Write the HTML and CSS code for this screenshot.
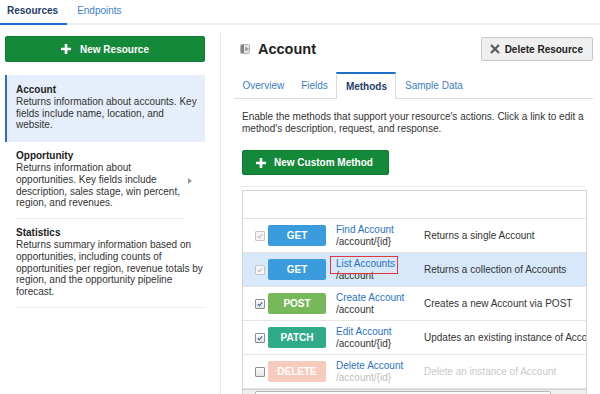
FILE: index.html
```html
<!DOCTYPE html>
<html lang="en">
<head>
<meta charset="utf-8">
<title>Resources</title>
<link rel="stylesheet" href="styles.css">
</head>
<body>
<div class="app">
  <nav class="topnav">
    <a class="topnav-tab active">Resources</a>
    <a class="topnav-tab">Endpoints</a>
  </nav>
  <div class="layout">
    <aside class="sidebar">
      <button class="btn btn-green btn-block">
        <svg class="ico-plus" width="10" height="10" viewBox="0 0 10 10"><path d="M5 0V10M0 5H10" stroke="#fff" stroke-width="2.6"/></svg>
        <span>New Resource</span>
      </button>
      <ul class="res-list">
        <li class="res-item selected">
          <div class="res-body">
            <div class="res-title">Account</div>
            <div class="res-desc">Returns information about accounts. Key fields include name, location, and website.</div>
          </div>
        </li>
        <li class="res-item">
          <div class="res-body">
            <div class="res-title">Opportunity</div>
            <div class="res-desc">Returns information about opportunities. Key fields include description, sales stage, win percent, region, and revenues.</div>
          </div>
          <span class="res-arrow"><span class="tri"></span></span>
        </li>
        <li class="res-item">
          <div class="res-body">
            <div class="res-title">Statistics</div>
            <div class="res-desc">Returns summary information based on opportunities, including counts of opportunities per region, revenue totals by region, and the opportunity pipeline forecast.</div>
          </div>
        </li>
      </ul>
    </aside>
    <main class="main">
      <header class="main-head">
        <div class="title-wrap">
          <svg class="ico-panel" width="10" height="10" viewBox="0 0 10 10">
            <rect x="0.5" y="0.5" width="9" height="9" rx="1" fill="#e2e2e2" stroke="#b5b5b5"/>
            <rect x="1" y="1" width="3" height="8" fill="#858585"/>
            <path d="M6 3V7M6 5H8.5" stroke="#777" stroke-width="1"/>
          </svg>
          <h1 class="title">Account</h1>
        </div>
        <button class="btn btn-gray">
          <svg width="10" height="10" viewBox="0 0 10 10"><path d="M1 1L9 9M9 1L1 9" stroke="#5a5a5a" stroke-width="2.2"/></svg>
          <span>Delete Resource</span>
        </button>
      </header>
      <div class="tabs">
        <a class="tab">Overview</a>
        <a class="tab">Fields</a>
        <a class="tab active">Methods</a>
        <a class="tab">Sample Data</a>
      </div>
      <p class="intro">Enable the methods that support your resource's actions. Click a link to edit a method's description, request, and response.</p>
      <button class="btn btn-green btn-custom">
        <svg width="10" height="10" viewBox="0 0 10 10"><path d="M5 0V10M0 5H10" stroke="#fff" stroke-width="2.6"/></svg>
        <span>New Custom Method</span>
      </button>
      <div class="rule"></div>
      <div class="methods">
        <div class="mhead"></div>
        <div class="mrow">
          <span class="cb cb-dis"><svg viewBox="0 0 10 10"><path d="M2.2 5.2L4.2 7.2L7.8 2.8" fill="none" stroke="#b8b8b8" stroke-width="1.3"/></svg></span>
          <span class="badge get">GET</span>
          <div class="mname"><a class="link">Find Account</a><span class="path">/account/{id}</span></div>
          <span class="mdesc">Returns a single Account</span>
        </div>
        <div class="mrow hl">
          <span class="cb cb-dis"><svg viewBox="0 0 10 10"><path d="M2.2 5.2L4.2 7.2L7.8 2.8" fill="none" stroke="#b8b8b8" stroke-width="1.3"/></svg></span>
          <span class="badge get">GET</span>
          <div class="mname"><a class="link marked">List Accounts</a><span class="path">/account</span></div>
          <span class="mdesc">Returns a collection of Accounts</span>
        </div>
        <div class="mrow">
          <span class="cb cb-on"><svg viewBox="0 0 10 10"><path d="M2.2 5.2L4.2 7.2L7.8 2.8" fill="none" stroke="#2b56a6" stroke-width="1.4"/></svg></span>
          <span class="badge post">POST</span>
          <div class="mname"><a class="link">Create Account</a><span class="path">/account</span></div>
          <span class="mdesc">Creates a new Account via POST</span>
        </div>
        <div class="mrow">
          <span class="cb cb-on"><svg viewBox="0 0 10 10"><path d="M2.2 5.2L4.2 7.2L7.8 2.8" fill="none" stroke="#2b56a6" stroke-width="1.4"/></svg></span>
          <span class="badge patch">PATCH</span>
          <div class="mname"><a class="link">Edit Account</a><span class="path">/account/{id}</span></div>
          <span class="mdesc">Updates an existing instance of Account</span>
        </div>
        <div class="mrow off">
          <span class="cb"></span>
          <span class="badge delete">DELETE</span>
          <div class="mname"><a class="link">Delete Account</a><span class="path">/account/{id}</span></div>
          <span class="mdesc">Delete an instance of Account</span>
        </div>
        <div class="hscroll">
          <span class="sb-arrow left"></span>
          <span class="sb-thumb"><span class="grip"></span></span>
          <span class="sb-track"></span>
          <span class="sb-arrow right"></span>
        </div>
      </div>
    </main>
  </div>
</div>
</body>
</html>
```

FILE: styles.css
```css
* { box-sizing: border-box; }
html, body { margin: 0; padding: 0; }
body {
  font-family: "Liberation Sans", Arial, sans-serif;
  font-size: 10px;
  color: #333;
  background: #fff;
  width: 600px;
  height: 394px;
  overflow: hidden;
}
.app { display: flex; flex-direction: column; height: 394px; }

/* top nav */
.topnav {
  display: flex;
  flex: none;
  height: 25px;
  border-bottom: 2px solid #eceff3;
}
.topnav-tab {
  height: 25px;
  padding: 5px 9px 0 10px;
  line-height: 12px;
  color: #3a7fc5;
  text-decoration: none;
}
.topnav-tab.active {
  padding-left: 7px;
  font-weight: bold;
  color: #1e3b66;
  border-bottom: 2px solid #1b72c6;
}

.layout { display: flex; flex: 1; min-height: 0; }

/* sidebar */
.sidebar {
  width: 221px;
  flex: none;
  margin-top: 8px;
  padding: 3px 15px 0 5px;
  border-right: 1px solid #e7e7e7;
}
.btn {
  display: flex;
  align-items: center;
  justify-content: center;
  font-family: inherit;
  font-size: 10px;
  font-weight: bold;
  cursor: pointer;
  padding: 0;
}
.btn-green {
  background: #15893a;
  border: 1px solid #0f7a30;
  border-radius: 2px;
  color: #fff;
}
.btn-block { width: 100%; height: 26px; gap: 9px; }

.res-list { list-style: none; margin: 13px 0 0; padding: 0; }
.res-item { display: flex; padding-left: 11px; }
.res-item.selected {
  background: #e5eefa;
  border-left: 2px solid #2a6fcf;
  padding-left: 9px;
  padding-right: 3px;
}
.res-body {
  flex: 1;
  min-width: 0;
  padding: 8px 0 9px;
  line-height: 11.8px;
  border-bottom: 1px solid #ececec;
}
.selected .res-body { border-bottom: none; padding: 9px 0 11px; }
.res-title { font-weight: bold; color: #222; }
.res-arrow {
  flex: none;
  width: 21px;
  padding-left: 4px;
  display: flex;
  align-items: center;
}
.tri {
  width: 0; height: 0;
  border-left: 4px solid #9a9a9a;
  border-top: 3px solid transparent;
  border-bottom: 3px solid transparent;
}

/* main */
.main {
  flex: 1;
  min-width: 0;
  display: flex;
  flex-direction: column;
  padding: 12px 7px 0 13px;
  overflow: hidden;
}
.main-head {
  display: flex;
  align-items: center;
  justify-content: space-between;
  height: 24px;
  flex: none;
}
.title-wrap { display: flex; align-items: center; gap: 8px; margin-left: 6px; }
.ico-panel { display: block; }
.title { margin: 0; font-size: 14.5px; font-weight: bold; color: #222; }
.btn-gray {
  height: 24px;
  padding: 0 9px 0 8px;
  gap: 5px;
  background: #efefef;
  border: 1px solid #c9c9c9;
  border-radius: 2px;
  color: #222;
}

.tabs {
  display: flex;
  flex: none;
  height: 27px;
  margin-top: 11px;
  border-bottom: 1px solid #dcdcdc;
}
.tab {
  display: flex;
  align-items: center;
  padding: 0 8.5px;
  color: #3b7dc0;
}
.tab.active {
  font-weight: bold;
  color: #1e3d6a;
  background: #fff;
  border: 1px solid #dcdcdc;
  border-top: 2px solid #1b72c6;
  border-bottom: none;
  margin-bottom: -1px;
  padding: 0 8.5px;
}

.intro {
  margin: 12px 0 0 8px;
  line-height: 12px;
  color: #333;
  flex: none;
}
.btn-custom {
  flex: none;
  align-self: flex-start;
  height: 25px;
  margin: 15px 0 0 8px;
  padding: 0 15px 0 13px;
  gap: 8px;
}
.rule {
  flex: none;
  height: 1px;
  margin: 11px 8px 0 6px;
  background: #ebebeb;
}

.methods {
  flex: none;
  margin: 3px 6px 0 8px;
  border: 1px solid #d3d3d3;
  overflow: hidden;
}
.mhead { height: 28px; border-bottom: 1px solid #e3e3e3; }
.mrow {
  display: flex;
  align-items: center;
  height: 34px;
  padding-left: 12px;
  border-bottom: 1px solid #e6e6e6;
  white-space: nowrap;
}
.mrow.hl { background: #d6e8f9; }
.cb {
  flex: none;
  width: 10px;
  height: 10px;
  margin-right: 3px;
  border: 1px solid #8d8d8d;
  border-radius: 1px;
  background: linear-gradient(#fdfdfd, #e4e4e4);
  display: flex;
}
.cb svg { width: 100%; height: 100%; display: block; }
.cb-dis { border-color: #c6c6c6; background: #f4f4f4; }
.badge {
  flex: none;
  width: 58px;
  height: 21px;
  border-radius: 2px;
  color: #fff;
  font-weight: bold;
  display: flex;
  align-items: center;
  justify-content: center;
}
.get { background: #3a9cdc; }
.post { background: #77b95a; }
.patch { background: #30ab89; }
.delete { background: #f7cbbb; }
.mname {
  flex: none;
  width: 88px;
  margin-left: 10px;
  display: flex;
  flex-direction: column;
  line-height: 12px;
}
.link { color: #2a72c2; text-decoration: none; }
.path { color: #333; }
.marked { position: relative; align-self: flex-start; }
.marked::after {
  content: "";
  position: absolute;
  left: -6px;
  right: -3px;
  top: -2px;
  bottom: -4px;
  border: 1.5px solid #e0363c;
}
.mdesc { color: #333; }
.off .path { color: #bdbdbd; }
.off .mdesc { color: #c8c8c8; }

.hscroll {
  display: flex;
  align-items: stretch;
  height: 17px;
  background: #f0f0f0;
  border-top: 1px solid #d0d0d0;
  padding-top: 1px;
}
.sb-arrow { width: 12px; flex: none; position: relative; }
.sb-arrow.left::before, .sb-arrow.right::before {
  content: "";
  position: absolute;
  top: 5px;
  border-top: 3px solid transparent;
  border-bottom: 3px solid transparent;
}
.sb-arrow.left::before { left: 0; border-right: 3px solid #888; }
.sb-arrow.right::before { right: 6px; border-left: 3px solid #888; }
.sb-thumb {
  flex: none;
  width: 296px;
  margin-left: 0;
  background: #fafafa;
  border: 1px solid #b4b4b4;
  border-radius: 2px;
  display: flex;
  justify-content: center;
}
.grip {
  width: 5px;
  height: 4px;
  margin-top: 2px;
  border-left: 1px solid #999;
  border-right: 1px solid #999;
  background: linear-gradient(90deg, transparent 1px, #999 1px, #999 2px, transparent 2px);
}
.sb-track { flex: 1; }
```
